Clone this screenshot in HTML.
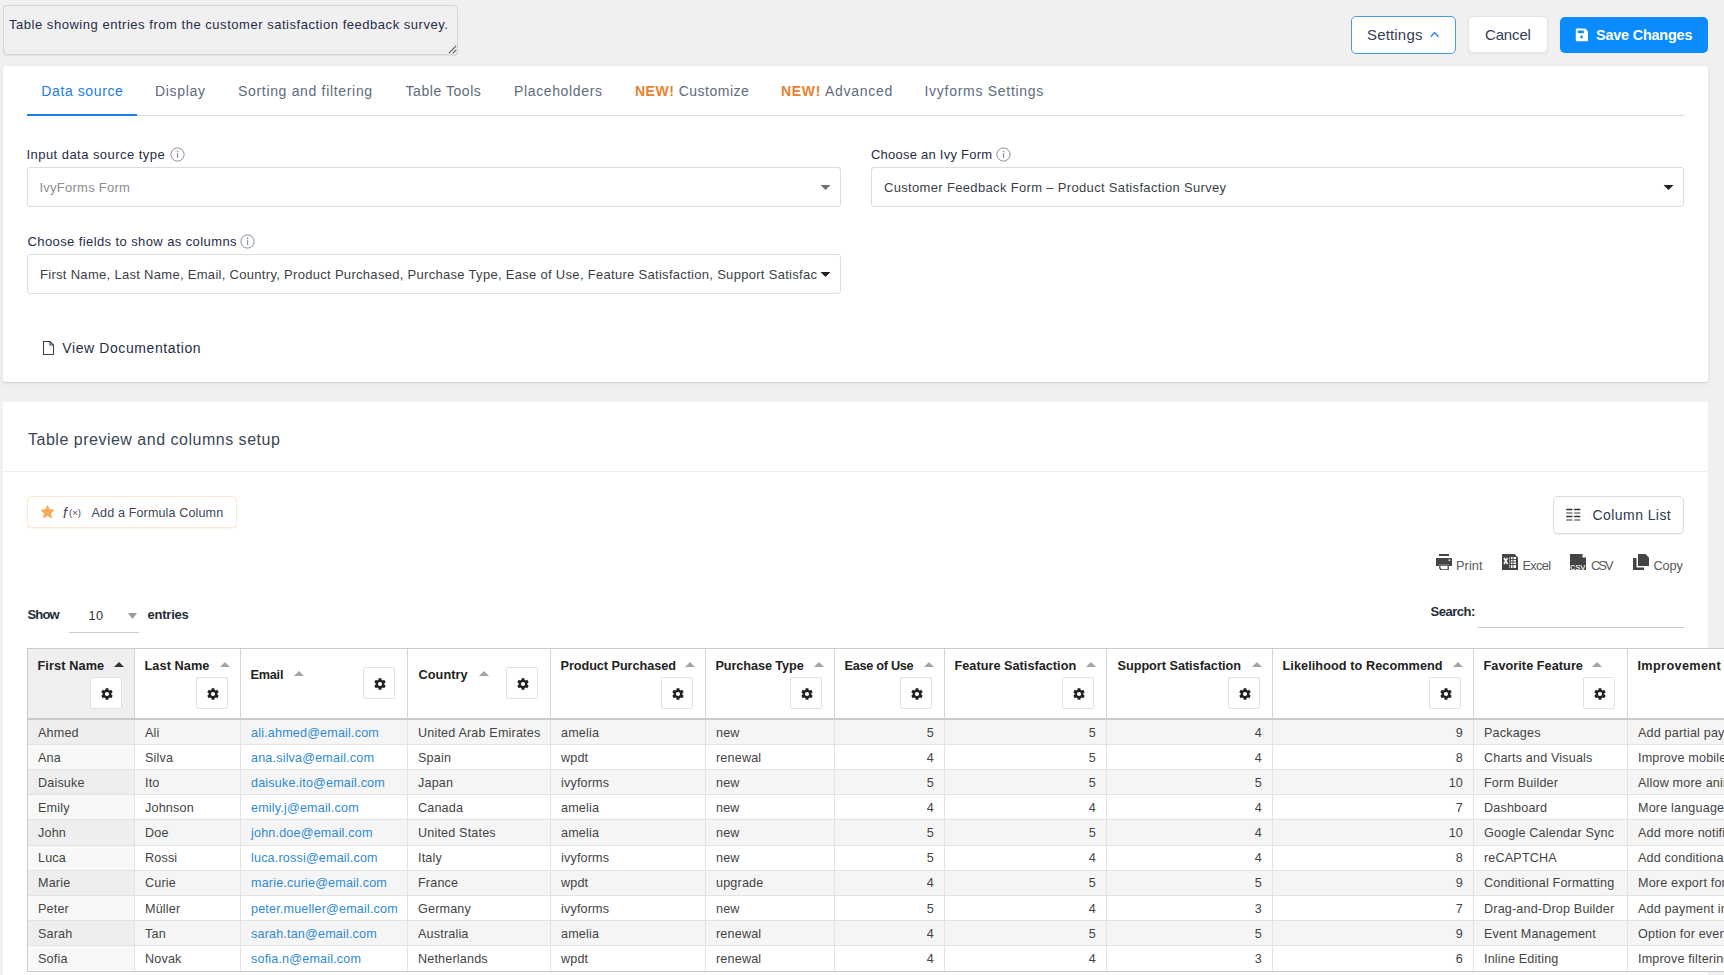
<!DOCTYPE html>
<html><head><meta charset="utf-8"><title>Table preview</title>
<style>
*{box-sizing:border-box;margin:0;padding:0}
html,body{width:1724px;height:975px;overflow:hidden;background:#f0f0f1;font-family:"Liberation Sans",sans-serif}
body{position:relative}
.t{position:absolute;white-space:nowrap;line-height:1}
</style></head><body>
<div style="position:absolute;left:3px;top:5px;width:455px;height:50px;border:1px solid #d6d6d8;border-radius:4px;background:#f0f0f1;box-shadow:0 1px 1px rgba(0,0,0,.07)"></div>
<svg style="position:absolute;left:447px;top:44px" width="10" height="10"><path d="M8.9 2.1 L2.2 8.8 M8.9 6.1 L6.2 8.8" stroke="#555" stroke-width="1.1" stroke-linecap="round"/></svg>
<div style="position:absolute;left:1351px;top:16px;width:105px;height:38px;border:1px solid #4a97e2;border-radius:5px;background:#fff"></div>
<svg style="position:absolute;left:1429px;top:30px" width="11" height="9"><path d="M1.7 6.7 L5.6 2.6 L9.5 6.7" fill="none" stroke="#2f86de" stroke-width="1.45"/></svg>
<div style="position:absolute;left:1468px;top:16px;width:80px;height:37px;border:1px solid #e2e4e8;border-radius:5px;background:#fff;box-shadow:0 1px 2px rgba(16,24,40,.08)"></div>
<div style="position:absolute;left:1560px;top:17px;width:148px;height:36px;border-radius:5px;background:#0a8bfe"></div>
<svg style="position:absolute;left:1575px;top:28px" width="14" height="14" viewBox="0 0 14 14"><path d="M1.3 0.5 H10.3 L13 3.2 V12.8 Q13 13.3 12.5 13.3 H1.3 Q0.8 13.3 0.8 12.8 V1 Q0.8 0.5 1.3 0.5 Z" fill="#fff"/><rect x="2.8" y="2.5" width="6" height="2.7" fill="#0a8bfe"/><circle cx="6.5" cy="9" r="1.4" fill="#0a8bfe"/></svg>
<div style="position:absolute;left:3px;top:66px;width:1705px;height:316px;background:#fff;border-radius:3px;box-shadow:0 1px 1px rgba(0,0,0,.10),0 2px 6px rgba(0,0,0,.06)"></div>
<div style="position:absolute;left:27px;top:115px;width:1657px;height:1px;background:#d9dde3"></div>
<div style="position:absolute;left:27px;top:114px;width:110px;height:2px;background:#1b7ee0"></div>
<svg style="position:absolute;left:169.5px;top:146.5px" width="15" height="15" viewBox="0 0 15 15"><circle cx="7.5" cy="7.5" r="6.6" fill="none" stroke="#8792a2" stroke-width="1"/><rect x="6.9" y="6.3" width="1.3" height="4.6" fill="#8792a2"/><circle cx="7.55" cy="4.4" r=".8" fill="#8792a2"/></svg>
<svg style="position:absolute;left:996px;top:146.5px" width="15" height="15" viewBox="0 0 15 15"><circle cx="7.5" cy="7.5" r="6.6" fill="none" stroke="#8792a2" stroke-width="1"/><rect x="6.9" y="6.3" width="1.3" height="4.6" fill="#8792a2"/><circle cx="7.55" cy="4.4" r=".8" fill="#8792a2"/></svg>
<svg style="position:absolute;left:240px;top:233.5px" width="15" height="15" viewBox="0 0 15 15"><circle cx="7.5" cy="7.5" r="6.6" fill="none" stroke="#8792a2" stroke-width="1"/><rect x="6.9" y="6.3" width="1.3" height="4.6" fill="#8792a2"/><circle cx="7.55" cy="4.4" r=".8" fill="#8792a2"/></svg>
<div style="position:absolute;left:27px;top:167px;width:814px;height:40px;border:1px solid #dadde3;border-radius:3px;background:#fff"></div>
<svg style="position:absolute;left:819.5px;top:183.5px" width="11" height="7"><path d="M0.5 1 H10.5 L5.5 6 Z" fill="#707070"/></svg>
<div style="position:absolute;left:871px;top:167px;width:813px;height:40px;border:1px solid #dadde3;border-radius:3px;background:#fff"></div>
<svg style="position:absolute;left:1662.5px;top:183.5px" width="11" height="7"><path d="M0.5 1 H10.5 L5.5 6 Z" fill="#222"/></svg>
<div style="position:absolute;left:27px;top:254px;width:814px;height:40px;border:1px solid #dadde3;border-radius:3px;background:#fff"></div>
<svg style="position:absolute;left:819.5px;top:270.5px" width="11" height="7"><path d="M0.5 1 H10.5 L5.5 6 Z" fill="#222"/></svg>
<div style="position:absolute;left:40px;top:262px;width:777px;height:24px;overflow:hidden"><div class="t" style="left:0;top:6.00px;font-size:13px;color:#3a3f47;letter-spacing:0.300px">First Name, Last Name, Email, Country, Product Purchased, Purchase Type, Ease of Use, Feature Satisfaction, Support Satisfaction, Likelihood to Recommend</div></div>
<svg style="position:absolute;left:42px;top:340px" width="13" height="16" viewBox="0 0 13 16"><path d="M1.5 1.5 H8 L11.5 5 V14.5 H1.5 Z M8 1.5 V5 H11.5" fill="none" stroke="#3b4452" stroke-width="1.1"/></svg>
<div style="position:absolute;left:3px;top:402px;width:1705px;height:600px;background:#fff"></div>
<div style="position:absolute;left:3px;top:471px;width:1705px;height:1px;background:#eceef1"></div>
<div style="position:absolute;left:27px;top:496px;width:210px;height:32px;border:1px solid #fce8d0;border-radius:4px;background:#fff;box-shadow:0 1px 1px rgba(240,160,60,.10)"></div>
<svg style="position:absolute;left:39.5px;top:505px" width="15" height="14" viewBox="0 0 24 23"><path d="M12 1 L15.1 7.6 L22.5 8.5 L17 13.5 L18.5 20.8 L12 17.2 L5.5 20.8 L7 13.5 L1.5 8.5 L8.9 7.6 Z" fill="#f8a957" stroke="#f8a957" stroke-width="1.5" stroke-linejoin="round"/></svg>
<div style="position:absolute;left:1553px;top:496px;width:131px;height:38px;border:1px solid #dadde3;border-radius:5px;background:#fff;box-shadow:0 1px 1px rgba(0,0,0,.06)"></div>
<svg style="position:absolute;left:1566px;top:508px" width="15" height="14"><rect x="0.2" y="0.8" width="6.3" height="1.5" rx="0.5" fill="#2a3340"/><rect x="8.1" y="0.8" width="6.3" height="1.5" rx="0.5" fill="#2a3340"/><rect x="0.2" y="4.2" width="6.3" height="1.5" rx="0.5" fill="#7a7a7a"/><rect x="8.1" y="4.2" width="6.3" height="1.5" rx="0.5" fill="#7a7a7a"/><rect x="0.2" y="7.8" width="6.3" height="1.5" rx="0.5" fill="#2a3340"/><rect x="8.1" y="7.8" width="6.3" height="1.5" rx="0.5" fill="#2a3340"/><rect x="0.2" y="11.2" width="6.3" height="1.5" rx="0.5" fill="#7a7a7a"/><rect x="8.1" y="11.2" width="6.3" height="1.5" rx="0.5" fill="#7a7a7a"/></svg>
<svg style="position:absolute;left:1435.5px;top:554px" width="16" height="16" viewBox="0 0 16 16"><rect x="3" y="0" width="10" height="2" fill="#444"/><path d="M0 4 H16 V12 H13 V10 H3 V12 H0 Z" fill="#444"/><path d="M3.8 11 H12.2 V16 H5.5 L3.8 14.3 Z" fill="none" stroke="#444" stroke-width="1.3"/><rect x="12.5" y="5.5" width="1.8" height="1.3" fill="#fff"/></svg>
<svg style="position:absolute;left:1502px;top:554px" width="16" height="16" viewBox="0 0 16 16"><path d="M0 0 H12.5 L16 3.5 V16 H0 Z" fill="#444"/><path d="M2 4 L5.5 10 M5.5 4 L2 10" stroke="#fff" stroke-width="1.5"/><rect x="7.5" y="3" width="6.5" height="11" fill="#fff"/><path d="M8.5 3 V14 M11 3 V14 M7.5 5.5 H14 M7.5 8 H14 M7.5 10.5 H14" stroke="#444" stroke-width="0.9"/></svg>
<svg style="position:absolute;left:1570px;top:554px" width="16" height="16" viewBox="0 0 16 16"><path d="M0 0 H12.5 L16 3.5 V16 H0 Z" fill="#444"/><path d="M12.5 0 V3.5 H16" fill="#fff"/><text x="0" y="15.8" font-family="Liberation Sans" font-size="9" fill="#fff" textLength="15.5" lengthAdjust="spacingAndGlyphs">csv</text></svg>
<svg style="position:absolute;left:1632.5px;top:554px" width="16" height="16" viewBox="0 0 16 16"><path d="M5 0 H12.5 L16 3.5 V12 H5 Z" fill="#444"/><path d="M0 4 H3.5 V13.5 H11 V16 H0 Z" fill="#444"/></svg>
<svg style="position:absolute;left:127.5px;top:613px" width="9" height="6"><path d="M0 0 H9 L4.5 6 Z" fill="#9a9a9a"/></svg>
<div style="position:absolute;left:69px;top:632px;width:70px;height:1px;background:#cfcfcf"></div>
<div style="position:absolute;left:1478px;top:627px;width:206px;height:1px;background:#c5c5c5"></div>
<div style="position:absolute;left:27px;top:648px;width:1700px;height:1px;background:#cbcbcb"></div>
<div style="position:absolute;left:28px;top:649px;width:1700px;height:69px;background:#fff"></div>
<div style="position:absolute;left:28px;top:649px;width:106px;height:69px;background:#efefef"></div>
<div style="position:absolute;left:27px;top:718px;width:1700px;height:2px;background:#c9c9c9"></div>
<div style="position:absolute;left:28px;top:720px;width:1700px;height:24px;background:#f5f5f5"></div>
<div style="position:absolute;left:28px;top:720px;width:106px;height:24px;background:#eeeeee"></div>
<div style="position:absolute;left:27px;top:744px;width:1700px;height:1px;background:#e3e3e3"></div>
<div style="position:absolute;left:28px;top:745px;width:1700px;height:24px;background:#ffffff"></div>
<div style="position:absolute;left:28px;top:745px;width:106px;height:24px;background:#f8f8f8"></div>
<div style="position:absolute;left:27px;top:769px;width:1700px;height:1px;background:#e3e3e3"></div>
<div style="position:absolute;left:28px;top:770px;width:1700px;height:24px;background:#f5f5f5"></div>
<div style="position:absolute;left:28px;top:770px;width:106px;height:24px;background:#eeeeee"></div>
<div style="position:absolute;left:27px;top:794px;width:1700px;height:1px;background:#e3e3e3"></div>
<div style="position:absolute;left:28px;top:795px;width:1700px;height:24px;background:#ffffff"></div>
<div style="position:absolute;left:28px;top:795px;width:106px;height:24px;background:#f8f8f8"></div>
<div style="position:absolute;left:27px;top:819px;width:1700px;height:1px;background:#e3e3e3"></div>
<div style="position:absolute;left:28px;top:820px;width:1700px;height:25px;background:#f5f5f5"></div>
<div style="position:absolute;left:28px;top:820px;width:106px;height:25px;background:#eeeeee"></div>
<div style="position:absolute;left:27px;top:845px;width:1700px;height:1px;background:#e3e3e3"></div>
<div style="position:absolute;left:28px;top:846px;width:1700px;height:24px;background:#ffffff"></div>
<div style="position:absolute;left:28px;top:846px;width:106px;height:24px;background:#f8f8f8"></div>
<div style="position:absolute;left:27px;top:870px;width:1700px;height:1px;background:#e3e3e3"></div>
<div style="position:absolute;left:28px;top:871px;width:1700px;height:24px;background:#f5f5f5"></div>
<div style="position:absolute;left:28px;top:871px;width:106px;height:24px;background:#eeeeee"></div>
<div style="position:absolute;left:27px;top:895px;width:1700px;height:1px;background:#e3e3e3"></div>
<div style="position:absolute;left:28px;top:896px;width:1700px;height:24px;background:#ffffff"></div>
<div style="position:absolute;left:28px;top:896px;width:106px;height:24px;background:#f8f8f8"></div>
<div style="position:absolute;left:27px;top:920px;width:1700px;height:1px;background:#e3e3e3"></div>
<div style="position:absolute;left:28px;top:921px;width:1700px;height:24px;background:#f5f5f5"></div>
<div style="position:absolute;left:28px;top:921px;width:106px;height:24px;background:#eeeeee"></div>
<div style="position:absolute;left:27px;top:945px;width:1700px;height:1px;background:#e3e3e3"></div>
<div style="position:absolute;left:28px;top:946px;width:1700px;height:25px;background:#ffffff"></div>
<div style="position:absolute;left:28px;top:946px;width:106px;height:25px;background:#f8f8f8"></div>
<div style="position:absolute;left:27px;top:971px;width:1700px;height:1px;background:#c9c9c9"></div>
<div style="position:absolute;left:27px;top:649px;width:1px;height:69px;background:#cbcbcb"></div>
<div style="position:absolute;left:27px;top:720px;width:1px;height:251px;background:#cbcbcb"></div>
<div style="position:absolute;left:134px;top:649px;width:1px;height:69px;background:#d6d6d6"></div>
<div style="position:absolute;left:134px;top:720px;width:1px;height:251px;background:#e3e3e3"></div>
<div style="position:absolute;left:240px;top:649px;width:1px;height:69px;background:#d6d6d6"></div>
<div style="position:absolute;left:240px;top:720px;width:1px;height:251px;background:#e3e3e3"></div>
<div style="position:absolute;left:407px;top:649px;width:1px;height:69px;background:#d6d6d6"></div>
<div style="position:absolute;left:407px;top:720px;width:1px;height:251px;background:#e3e3e3"></div>
<div style="position:absolute;left:550px;top:649px;width:1px;height:69px;background:#d6d6d6"></div>
<div style="position:absolute;left:550px;top:720px;width:1px;height:251px;background:#e3e3e3"></div>
<div style="position:absolute;left:705px;top:649px;width:1px;height:69px;background:#d6d6d6"></div>
<div style="position:absolute;left:705px;top:720px;width:1px;height:251px;background:#e3e3e3"></div>
<div style="position:absolute;left:834px;top:649px;width:1px;height:69px;background:#d6d6d6"></div>
<div style="position:absolute;left:834px;top:720px;width:1px;height:251px;background:#e3e3e3"></div>
<div style="position:absolute;left:944px;top:649px;width:1px;height:69px;background:#d6d6d6"></div>
<div style="position:absolute;left:944px;top:720px;width:1px;height:251px;background:#e3e3e3"></div>
<div style="position:absolute;left:1106px;top:649px;width:1px;height:69px;background:#d6d6d6"></div>
<div style="position:absolute;left:1106px;top:720px;width:1px;height:251px;background:#e3e3e3"></div>
<div style="position:absolute;left:1272px;top:649px;width:1px;height:69px;background:#d6d6d6"></div>
<div style="position:absolute;left:1272px;top:720px;width:1px;height:251px;background:#e3e3e3"></div>
<div style="position:absolute;left:1473px;top:649px;width:1px;height:69px;background:#d6d6d6"></div>
<div style="position:absolute;left:1473px;top:720px;width:1px;height:251px;background:#e3e3e3"></div>
<div style="position:absolute;left:1627px;top:649px;width:1px;height:69px;background:#d6d6d6"></div>
<div style="position:absolute;left:1627px;top:720px;width:1px;height:251px;background:#e3e3e3"></div>
<svg style="position:absolute;left:114px;top:662px" width="10" height="5"><path d="M0 5 H10 L5 0 Z" fill="#333"/></svg>
<div style="position:absolute;left:90px;top:677px;width:32px;height:32px;border:1px solid #e2e2e2;border-radius:2px;background:#fff"></div>
<svg width="14" height="14" viewBox="0 0 24 24" style="position:absolute;left:99.6px;top:686.9px"><path fill="#222" fill-rule="evenodd" d="M9.40 4.86 L9.53 2.10 L14.47 2.10 L14.60 4.86 L16.89 6.18 L19.34 4.91 L21.80 9.19 L19.48 10.68 L19.48 13.32 L21.80 14.81 L19.34 19.09 L16.89 17.82 L14.60 19.14 L14.47 21.90 L9.53 21.90 L9.40 19.14 L7.11 17.82 L4.66 19.09 L2.20 14.81 L4.52 13.32 L4.52 10.68 L2.20 9.19 L4.66 4.91 L7.11 6.18 Z M15.6 12 A3.6 3.6 0 1 0 8.4 12 A3.6 3.6 0 1 0 15.6 12 Z"/></svg>
<svg style="position:absolute;left:220px;top:662px" width="10" height="5"><path d="M0 5 H10 L5 0 Z" fill="#a3a3a3"/></svg>
<div style="position:absolute;left:196px;top:677px;width:32px;height:32px;border:1px solid #e2e2e2;border-radius:2px;background:#fff"></div>
<svg width="14" height="14" viewBox="0 0 24 24" style="position:absolute;left:205.6px;top:686.9px"><path fill="#222" fill-rule="evenodd" d="M9.40 4.86 L9.53 2.10 L14.47 2.10 L14.60 4.86 L16.89 6.18 L19.34 4.91 L21.80 9.19 L19.48 10.68 L19.48 13.32 L21.80 14.81 L19.34 19.09 L16.89 17.82 L14.60 19.14 L14.47 21.90 L9.53 21.90 L9.40 19.14 L7.11 17.82 L4.66 19.09 L2.20 14.81 L4.52 13.32 L4.52 10.68 L2.20 9.19 L4.66 4.91 L7.11 6.18 Z M15.6 12 A3.6 3.6 0 1 0 8.4 12 A3.6 3.6 0 1 0 15.6 12 Z"/></svg>
<svg style="position:absolute;left:294px;top:671px" width="10" height="5"><path d="M0 5 H10 L5 0 Z" fill="#a3a3a3"/></svg>
<div style="position:absolute;left:363px;top:667px;width:32px;height:32px;border:1px solid #e2e2e2;border-radius:2px;background:#fff"></div>
<svg width="14" height="14" viewBox="0 0 24 24" style="position:absolute;left:372.6px;top:676.9px"><path fill="#222" fill-rule="evenodd" d="M9.40 4.86 L9.53 2.10 L14.47 2.10 L14.60 4.86 L16.89 6.18 L19.34 4.91 L21.80 9.19 L19.48 10.68 L19.48 13.32 L21.80 14.81 L19.34 19.09 L16.89 17.82 L14.60 19.14 L14.47 21.90 L9.53 21.90 L9.40 19.14 L7.11 17.82 L4.66 19.09 L2.20 14.81 L4.52 13.32 L4.52 10.68 L2.20 9.19 L4.66 4.91 L7.11 6.18 Z M15.6 12 A3.6 3.6 0 1 0 8.4 12 A3.6 3.6 0 1 0 15.6 12 Z"/></svg>
<svg style="position:absolute;left:479px;top:671px" width="10" height="5"><path d="M0 5 H10 L5 0 Z" fill="#a3a3a3"/></svg>
<div style="position:absolute;left:506px;top:667px;width:32px;height:32px;border:1px solid #e2e2e2;border-radius:2px;background:#fff"></div>
<svg width="14" height="14" viewBox="0 0 24 24" style="position:absolute;left:515.6px;top:676.9px"><path fill="#222" fill-rule="evenodd" d="M9.40 4.86 L9.53 2.10 L14.47 2.10 L14.60 4.86 L16.89 6.18 L19.34 4.91 L21.80 9.19 L19.48 10.68 L19.48 13.32 L21.80 14.81 L19.34 19.09 L16.89 17.82 L14.60 19.14 L14.47 21.90 L9.53 21.90 L9.40 19.14 L7.11 17.82 L4.66 19.09 L2.20 14.81 L4.52 13.32 L4.52 10.68 L2.20 9.19 L4.66 4.91 L7.11 6.18 Z M15.6 12 A3.6 3.6 0 1 0 8.4 12 A3.6 3.6 0 1 0 15.6 12 Z"/></svg>
<svg style="position:absolute;left:685px;top:662px" width="10" height="5"><path d="M0 5 H10 L5 0 Z" fill="#a3a3a3"/></svg>
<div style="position:absolute;left:661px;top:677px;width:32px;height:32px;border:1px solid #e2e2e2;border-radius:2px;background:#fff"></div>
<svg width="14" height="14" viewBox="0 0 24 24" style="position:absolute;left:670.6px;top:686.9px"><path fill="#222" fill-rule="evenodd" d="M9.40 4.86 L9.53 2.10 L14.47 2.10 L14.60 4.86 L16.89 6.18 L19.34 4.91 L21.80 9.19 L19.48 10.68 L19.48 13.32 L21.80 14.81 L19.34 19.09 L16.89 17.82 L14.60 19.14 L14.47 21.90 L9.53 21.90 L9.40 19.14 L7.11 17.82 L4.66 19.09 L2.20 14.81 L4.52 13.32 L4.52 10.68 L2.20 9.19 L4.66 4.91 L7.11 6.18 Z M15.6 12 A3.6 3.6 0 1 0 8.4 12 A3.6 3.6 0 1 0 15.6 12 Z"/></svg>
<svg style="position:absolute;left:814px;top:662px" width="10" height="5"><path d="M0 5 H10 L5 0 Z" fill="#a3a3a3"/></svg>
<div style="position:absolute;left:790px;top:677px;width:32px;height:32px;border:1px solid #e2e2e2;border-radius:2px;background:#fff"></div>
<svg width="14" height="14" viewBox="0 0 24 24" style="position:absolute;left:799.6px;top:686.9px"><path fill="#222" fill-rule="evenodd" d="M9.40 4.86 L9.53 2.10 L14.47 2.10 L14.60 4.86 L16.89 6.18 L19.34 4.91 L21.80 9.19 L19.48 10.68 L19.48 13.32 L21.80 14.81 L19.34 19.09 L16.89 17.82 L14.60 19.14 L14.47 21.90 L9.53 21.90 L9.40 19.14 L7.11 17.82 L4.66 19.09 L2.20 14.81 L4.52 13.32 L4.52 10.68 L2.20 9.19 L4.66 4.91 L7.11 6.18 Z M15.6 12 A3.6 3.6 0 1 0 8.4 12 A3.6 3.6 0 1 0 15.6 12 Z"/></svg>
<svg style="position:absolute;left:924px;top:662px" width="10" height="5"><path d="M0 5 H10 L5 0 Z" fill="#a3a3a3"/></svg>
<div style="position:absolute;left:900px;top:677px;width:32px;height:32px;border:1px solid #e2e2e2;border-radius:2px;background:#fff"></div>
<svg width="14" height="14" viewBox="0 0 24 24" style="position:absolute;left:909.6px;top:686.9px"><path fill="#222" fill-rule="evenodd" d="M9.40 4.86 L9.53 2.10 L14.47 2.10 L14.60 4.86 L16.89 6.18 L19.34 4.91 L21.80 9.19 L19.48 10.68 L19.48 13.32 L21.80 14.81 L19.34 19.09 L16.89 17.82 L14.60 19.14 L14.47 21.90 L9.53 21.90 L9.40 19.14 L7.11 17.82 L4.66 19.09 L2.20 14.81 L4.52 13.32 L4.52 10.68 L2.20 9.19 L4.66 4.91 L7.11 6.18 Z M15.6 12 A3.6 3.6 0 1 0 8.4 12 A3.6 3.6 0 1 0 15.6 12 Z"/></svg>
<svg style="position:absolute;left:1086px;top:662px" width="10" height="5"><path d="M0 5 H10 L5 0 Z" fill="#a3a3a3"/></svg>
<div style="position:absolute;left:1062px;top:677px;width:32px;height:32px;border:1px solid #e2e2e2;border-radius:2px;background:#fff"></div>
<svg width="14" height="14" viewBox="0 0 24 24" style="position:absolute;left:1071.6px;top:686.9px"><path fill="#222" fill-rule="evenodd" d="M9.40 4.86 L9.53 2.10 L14.47 2.10 L14.60 4.86 L16.89 6.18 L19.34 4.91 L21.80 9.19 L19.48 10.68 L19.48 13.32 L21.80 14.81 L19.34 19.09 L16.89 17.82 L14.60 19.14 L14.47 21.90 L9.53 21.90 L9.40 19.14 L7.11 17.82 L4.66 19.09 L2.20 14.81 L4.52 13.32 L4.52 10.68 L2.20 9.19 L4.66 4.91 L7.11 6.18 Z M15.6 12 A3.6 3.6 0 1 0 8.4 12 A3.6 3.6 0 1 0 15.6 12 Z"/></svg>
<svg style="position:absolute;left:1252px;top:662px" width="10" height="5"><path d="M0 5 H10 L5 0 Z" fill="#a3a3a3"/></svg>
<div style="position:absolute;left:1228px;top:677px;width:32px;height:32px;border:1px solid #e2e2e2;border-radius:2px;background:#fff"></div>
<svg width="14" height="14" viewBox="0 0 24 24" style="position:absolute;left:1237.6px;top:686.9px"><path fill="#222" fill-rule="evenodd" d="M9.40 4.86 L9.53 2.10 L14.47 2.10 L14.60 4.86 L16.89 6.18 L19.34 4.91 L21.80 9.19 L19.48 10.68 L19.48 13.32 L21.80 14.81 L19.34 19.09 L16.89 17.82 L14.60 19.14 L14.47 21.90 L9.53 21.90 L9.40 19.14 L7.11 17.82 L4.66 19.09 L2.20 14.81 L4.52 13.32 L4.52 10.68 L2.20 9.19 L4.66 4.91 L7.11 6.18 Z M15.6 12 A3.6 3.6 0 1 0 8.4 12 A3.6 3.6 0 1 0 15.6 12 Z"/></svg>
<svg style="position:absolute;left:1453px;top:662px" width="10" height="5"><path d="M0 5 H10 L5 0 Z" fill="#a3a3a3"/></svg>
<div style="position:absolute;left:1429px;top:677px;width:32px;height:32px;border:1px solid #e2e2e2;border-radius:2px;background:#fff"></div>
<svg width="14" height="14" viewBox="0 0 24 24" style="position:absolute;left:1438.6px;top:686.9px"><path fill="#222" fill-rule="evenodd" d="M9.40 4.86 L9.53 2.10 L14.47 2.10 L14.60 4.86 L16.89 6.18 L19.34 4.91 L21.80 9.19 L19.48 10.68 L19.48 13.32 L21.80 14.81 L19.34 19.09 L16.89 17.82 L14.60 19.14 L14.47 21.90 L9.53 21.90 L9.40 19.14 L7.11 17.82 L4.66 19.09 L2.20 14.81 L4.52 13.32 L4.52 10.68 L2.20 9.19 L4.66 4.91 L7.11 6.18 Z M15.6 12 A3.6 3.6 0 1 0 8.4 12 A3.6 3.6 0 1 0 15.6 12 Z"/></svg>
<svg style="position:absolute;left:1592px;top:662px" width="10" height="5"><path d="M0 5 H10 L5 0 Z" fill="#a3a3a3"/></svg>
<div style="position:absolute;left:1583px;top:677px;width:32px;height:32px;border:1px solid #e2e2e2;border-radius:2px;background:#fff"></div>
<svg width="14" height="14" viewBox="0 0 24 24" style="position:absolute;left:1592.6px;top:686.9px"><path fill="#222" fill-rule="evenodd" d="M9.40 4.86 L9.53 2.10 L14.47 2.10 L14.60 4.86 L16.89 6.18 L19.34 4.91 L21.80 9.19 L19.48 10.68 L19.48 13.32 L21.80 14.81 L19.34 19.09 L16.89 17.82 L14.60 19.14 L14.47 21.90 L9.53 21.90 L9.40 19.14 L7.11 17.82 L4.66 19.09 L2.20 14.81 L4.52 13.32 L4.52 10.68 L2.20 9.19 L4.66 4.91 L7.11 6.18 Z M15.6 12 A3.6 3.6 0 1 0 8.4 12 A3.6 3.6 0 1 0 15.6 12 Z"/></svg>
<div class="t" style="left:9.00px;top:17.80px;font-size:13px;font-weight:400;color:#1f2d47;letter-spacing:0.529px;">Table showing entries from the customer satisfaction feedback survey.</div>
<div class="t" style="left:1367.00px;top:26.70px;font-size:15px;font-weight:400;color:#344054;letter-spacing:0.171px;">Settings</div>
<div class="t" style="left:1485.00px;top:26.70px;font-size:15px;font-weight:400;color:#344054;letter-spacing:-0.160px;">Cancel</div>
<div class="t" style="left:1596.00px;top:27.61px;font-size:14.4px;font-weight:700;color:#ffffff;letter-spacing:-0.182px;">Save Changes</div>
<div class="t" style="left:41.30px;top:83.95px;font-size:14px;font-weight:400;color:#1b7ee0;letter-spacing:0.600px;">Data source</div>
<div class="t" style="left:155.00px;top:83.95px;font-size:14px;font-weight:400;color:#5d6b7e;letter-spacing:0.667px;">Display</div>
<div class="t" style="left:238.00px;top:83.95px;font-size:14px;font-weight:400;color:#5d6b7e;letter-spacing:0.675px;">Sorting and filtering</div>
<div class="t" style="left:405.50px;top:83.95px;font-size:14px;font-weight:400;color:#5d6b7e;letter-spacing:0.550px;">Table Tools</div>
<div class="t" style="left:514.00px;top:83.95px;font-size:14px;font-weight:400;color:#5d6b7e;letter-spacing:0.636px;">Placeholders</div>
<div class="t" style="left:635.00px;top:83.95px;font-size:14px;font-weight:400;color:#5d6b7e;letter-spacing:0.500px;"><span style="color:#e8822f;font-weight:700">NEW!</span> Customize</div>
<div class="t" style="left:781.00px;top:83.95px;font-size:14px;font-weight:400;color:#5d6b7e;letter-spacing:0.708px;"><span style="color:#e8822f;font-weight:700">NEW!</span> Advanced</div>
<div class="t" style="left:924.50px;top:83.95px;font-size:14px;font-weight:400;color:#5d6b7e;letter-spacing:0.719px;">Ivyforms Settings</div>
<div class="t" style="left:26.50px;top:148.30px;font-size:13px;font-weight:400;color:#1f2d47;letter-spacing:0.452px;">Input data source type</div>
<div class="t" style="left:871.00px;top:148.30px;font-size:13px;font-weight:400;color:#1f2d47;letter-spacing:0.235px;">Choose an Ivy Form</div>
<div class="t" style="left:27.50px;top:235.30px;font-size:13px;font-weight:400;color:#1f2d47;letter-spacing:0.403px;">Choose fields to show as columns</div>
<div class="t" style="left:39.50px;top:181.00px;font-size:13px;font-weight:400;color:#8c8c8c;letter-spacing:0.242px;">IvyForms Form</div>
<div class="t" style="left:884.00px;top:181.00px;font-size:13px;font-weight:400;color:#3a3f47;letter-spacing:0.333px;">Customer Feedback Form – Product Satisfaction Survey</div>
<div class="t" style="left:62.30px;top:341.45px;font-size:14px;font-weight:400;color:#1f2d47;letter-spacing:0.594px;">View Documentation</div>
<div class="t" style="left:28.00px;top:432.46px;font-size:16px;font-weight:400;color:#3a4656;letter-spacing:0.507px;">Table preview and columns setup</div>
<div class="t" style="left:63.00px;top:505.65px;font-size:14px;font-weight:400;color:#3c4858;letter-spacing:0.000px;font-family:"Liberation Serif",serif;"><i>f</i></div>
<div class="t" style="left:69.00px;top:508.46px;font-size:9.5px;font-weight:400;color:#3c4858;letter-spacing:0.000px;">(×)</div>
<div class="t" style="left:91.60px;top:507.33px;font-size:12.6px;font-weight:400;color:#3c4858;letter-spacing:0.111px;">Add a Formula Column</div>
<div class="t" style="left:1592.60px;top:508.15px;font-size:14px;font-weight:400;color:#2c3a4d;letter-spacing:0.420px;">Column List</div>
<div class="t" style="left:1456.00px;top:559.86px;font-size:12.8px;font-weight:400;color:#5a5a5a;letter-spacing:0.050px;">Print</div>
<div class="t" style="left:1522.40px;top:559.86px;font-size:12.8px;font-weight:400;color:#5a5a5a;letter-spacing:-0.675px;">Excel</div>
<div class="t" style="left:1590.90px;top:559.86px;font-size:12.8px;font-weight:400;color:#5a5a5a;letter-spacing:-1.800px;">CSV</div>
<div class="t" style="left:1653.50px;top:559.86px;font-size:12.8px;font-weight:400;color:#5a5a5a;letter-spacing:-0.167px;">Copy</div>
<div class="t" style="left:27.50px;top:607.80px;font-size:13px;font-weight:700;color:#222d3a;letter-spacing:-0.833px;">Show</div>
<div class="t" style="left:88.60px;top:610.16px;font-size:12.8px;font-weight:400;color:#333;letter-spacing:0.200px;">10</div>
<div class="t" style="left:147.60px;top:607.80px;font-size:13px;font-weight:700;color:#222d3a;letter-spacing:-0.250px;">entries</div>
<div class="t" style="left:1430.60px;top:604.80px;font-size:13px;font-weight:700;color:#222d3a;letter-spacing:-0.483px;">Search:</div>
<div class="t" style="left:37.50px;top:659.55px;font-size:12.7px;font-weight:700;color:#222;letter-spacing:0.122px;">First Name</div>
<div class="t" style="left:144.50px;top:659.55px;font-size:12.7px;font-weight:700;color:#222;letter-spacing:0.088px;">Last Name</div>
<div class="t" style="left:250.50px;top:668.85px;font-size:12.7px;font-weight:700;color:#222;letter-spacing:-0.225px;">Email</div>
<div class="t" style="left:418.50px;top:668.85px;font-size:12.7px;font-weight:700;color:#222;letter-spacing:0.083px;">Country</div>
<div class="t" style="left:560.50px;top:659.55px;font-size:12.7px;font-weight:700;color:#222;letter-spacing:-0.056px;">Product Purchased</div>
<div class="t" style="left:715.50px;top:659.55px;font-size:12.7px;font-weight:700;color:#222;letter-spacing:-0.092px;">Purchase Type</div>
<div class="t" style="left:844.50px;top:659.55px;font-size:12.7px;font-weight:700;color:#222;letter-spacing:-0.280px;">Ease of Use</div>
<div class="t" style="left:954.50px;top:659.55px;font-size:12.7px;font-weight:700;color:#222;letter-spacing:0.021px;">Feature Satisfaction</div>
<div class="t" style="left:1117.50px;top:659.55px;font-size:12.7px;font-weight:700;color:#222;letter-spacing:-0.026px;">Support Satisfaction</div>
<div class="t" style="left:1282.50px;top:659.55px;font-size:12.7px;font-weight:700;color:#222;letter-spacing:0.068px;">Likelihood to Recommend</div>
<div class="t" style="left:1483.50px;top:659.55px;font-size:12.7px;font-weight:700;color:#222;letter-spacing:0.047px;">Favorite Feature</div>
<div class="t" style="left:1637.50px;top:659.55px;font-size:12.7px;font-weight:700;color:#222;letter-spacing:0.350px;">Improvement</div>
<div class="t" style="left:38.00px;top:726.83px;font-size:12.6px;font-weight:400;color:#444444;letter-spacing:0.170px;">Ahmed</div>
<div class="t" style="left:145.00px;top:726.83px;font-size:12.6px;font-weight:400;color:#444444;letter-spacing:0.170px;">Ali</div>
<div class="t" style="left:251.00px;top:726.83px;font-size:12.6px;font-weight:400;color:#2f8ad2;letter-spacing:0.170px;">ali.ahmed@email.com</div>
<div class="t" style="left:418.00px;top:726.83px;font-size:12.6px;font-weight:400;color:#444444;letter-spacing:0.170px;">United Arab Emirates</div>
<div class="t" style="left:561.00px;top:726.83px;font-size:12.6px;font-weight:400;color:#444444;letter-spacing:0.170px;">amelia</div>
<div class="t" style="left:716.00px;top:726.83px;font-size:12.6px;font-weight:400;color:#444444;letter-spacing:0.170px;">new</div>
<div class="t" style="left:926.70px;top:726.83px;font-size:12.6px;font-weight:400;color:#444444;letter-spacing:0.170px;">5</div>
<div class="t" style="left:1088.70px;top:726.83px;font-size:12.6px;font-weight:400;color:#444444;letter-spacing:0.170px;">5</div>
<div class="t" style="left:1254.70px;top:726.83px;font-size:12.6px;font-weight:400;color:#444444;letter-spacing:0.170px;">4</div>
<div class="t" style="left:1455.70px;top:726.83px;font-size:12.6px;font-weight:400;color:#444444;letter-spacing:0.170px;">9</div>
<div class="t" style="left:1484.00px;top:726.83px;font-size:12.6px;font-weight:400;color:#444444;letter-spacing:0.170px;">Packages</div>
<div class="t" style="left:1638.00px;top:726.83px;font-size:12.6px;font-weight:400;color:#444444;letter-spacing:0.170px;">Add partial payments</div>
<div class="t" style="left:38.00px;top:751.93px;font-size:12.6px;font-weight:400;color:#444444;letter-spacing:0.170px;">Ana</div>
<div class="t" style="left:145.00px;top:751.93px;font-size:12.6px;font-weight:400;color:#444444;letter-spacing:0.170px;">Silva</div>
<div class="t" style="left:251.00px;top:751.93px;font-size:12.6px;font-weight:400;color:#2f8ad2;letter-spacing:0.170px;">ana.silva@email.com</div>
<div class="t" style="left:418.00px;top:751.93px;font-size:12.6px;font-weight:400;color:#444444;letter-spacing:0.170px;">Spain</div>
<div class="t" style="left:561.00px;top:751.93px;font-size:12.6px;font-weight:400;color:#444444;letter-spacing:0.170px;">wpdt</div>
<div class="t" style="left:716.00px;top:751.93px;font-size:12.6px;font-weight:400;color:#444444;letter-spacing:0.170px;">renewal</div>
<div class="t" style="left:926.70px;top:751.93px;font-size:12.6px;font-weight:400;color:#444444;letter-spacing:0.170px;">4</div>
<div class="t" style="left:1088.70px;top:751.93px;font-size:12.6px;font-weight:400;color:#444444;letter-spacing:0.170px;">5</div>
<div class="t" style="left:1254.70px;top:751.93px;font-size:12.6px;font-weight:400;color:#444444;letter-spacing:0.170px;">4</div>
<div class="t" style="left:1455.70px;top:751.93px;font-size:12.6px;font-weight:400;color:#444444;letter-spacing:0.170px;">8</div>
<div class="t" style="left:1484.00px;top:751.93px;font-size:12.6px;font-weight:400;color:#444444;letter-spacing:0.170px;">Charts and Visuals</div>
<div class="t" style="left:1638.00px;top:751.93px;font-size:12.6px;font-weight:400;color:#444444;letter-spacing:0.170px;">Improve mobile view</div>
<div class="t" style="left:38.00px;top:777.03px;font-size:12.6px;font-weight:400;color:#444444;letter-spacing:0.170px;">Daisuke</div>
<div class="t" style="left:145.00px;top:777.03px;font-size:12.6px;font-weight:400;color:#444444;letter-spacing:0.170px;">Ito</div>
<div class="t" style="left:251.00px;top:777.03px;font-size:12.6px;font-weight:400;color:#2f8ad2;letter-spacing:0.170px;">daisuke.ito@email.com</div>
<div class="t" style="left:418.00px;top:777.03px;font-size:12.6px;font-weight:400;color:#444444;letter-spacing:0.170px;">Japan</div>
<div class="t" style="left:561.00px;top:777.03px;font-size:12.6px;font-weight:400;color:#444444;letter-spacing:0.170px;">ivyforms</div>
<div class="t" style="left:716.00px;top:777.03px;font-size:12.6px;font-weight:400;color:#444444;letter-spacing:0.170px;">new</div>
<div class="t" style="left:926.70px;top:777.03px;font-size:12.6px;font-weight:400;color:#444444;letter-spacing:0.170px;">5</div>
<div class="t" style="left:1088.70px;top:777.03px;font-size:12.6px;font-weight:400;color:#444444;letter-spacing:0.170px;">5</div>
<div class="t" style="left:1254.70px;top:777.03px;font-size:12.6px;font-weight:400;color:#444444;letter-spacing:0.170px;">5</div>
<div class="t" style="left:1448.70px;top:777.03px;font-size:12.6px;font-weight:400;color:#444444;letter-spacing:0.170px;">10</div>
<div class="t" style="left:1484.00px;top:777.03px;font-size:12.6px;font-weight:400;color:#444444;letter-spacing:0.170px;">Form Builder</div>
<div class="t" style="left:1638.00px;top:777.03px;font-size:12.6px;font-weight:400;color:#444444;letter-spacing:0.170px;">Allow more animations</div>
<div class="t" style="left:38.00px;top:802.13px;font-size:12.6px;font-weight:400;color:#444444;letter-spacing:0.170px;">Emily</div>
<div class="t" style="left:145.00px;top:802.13px;font-size:12.6px;font-weight:400;color:#444444;letter-spacing:0.170px;">Johnson</div>
<div class="t" style="left:251.00px;top:802.13px;font-size:12.6px;font-weight:400;color:#2f8ad2;letter-spacing:0.170px;">emily.j@email.com</div>
<div class="t" style="left:418.00px;top:802.13px;font-size:12.6px;font-weight:400;color:#444444;letter-spacing:0.170px;">Canada</div>
<div class="t" style="left:561.00px;top:802.13px;font-size:12.6px;font-weight:400;color:#444444;letter-spacing:0.170px;">amelia</div>
<div class="t" style="left:716.00px;top:802.13px;font-size:12.6px;font-weight:400;color:#444444;letter-spacing:0.170px;">new</div>
<div class="t" style="left:926.70px;top:802.13px;font-size:12.6px;font-weight:400;color:#444444;letter-spacing:0.170px;">4</div>
<div class="t" style="left:1088.70px;top:802.13px;font-size:12.6px;font-weight:400;color:#444444;letter-spacing:0.170px;">4</div>
<div class="t" style="left:1254.70px;top:802.13px;font-size:12.6px;font-weight:400;color:#444444;letter-spacing:0.170px;">4</div>
<div class="t" style="left:1455.70px;top:802.13px;font-size:12.6px;font-weight:400;color:#444444;letter-spacing:0.170px;">7</div>
<div class="t" style="left:1484.00px;top:802.13px;font-size:12.6px;font-weight:400;color:#444444;letter-spacing:0.170px;">Dashboard</div>
<div class="t" style="left:1638.00px;top:802.13px;font-size:12.6px;font-weight:400;color:#444444;letter-spacing:0.170px;">More language options</div>
<div class="t" style="left:38.00px;top:827.23px;font-size:12.6px;font-weight:400;color:#444444;letter-spacing:0.170px;">John</div>
<div class="t" style="left:145.00px;top:827.23px;font-size:12.6px;font-weight:400;color:#444444;letter-spacing:0.170px;">Doe</div>
<div class="t" style="left:251.00px;top:827.23px;font-size:12.6px;font-weight:400;color:#2f8ad2;letter-spacing:0.170px;">john.doe@email.com</div>
<div class="t" style="left:418.00px;top:827.23px;font-size:12.6px;font-weight:400;color:#444444;letter-spacing:0.170px;">United States</div>
<div class="t" style="left:561.00px;top:827.23px;font-size:12.6px;font-weight:400;color:#444444;letter-spacing:0.170px;">amelia</div>
<div class="t" style="left:716.00px;top:827.23px;font-size:12.6px;font-weight:400;color:#444444;letter-spacing:0.170px;">new</div>
<div class="t" style="left:926.70px;top:827.23px;font-size:12.6px;font-weight:400;color:#444444;letter-spacing:0.170px;">5</div>
<div class="t" style="left:1088.70px;top:827.23px;font-size:12.6px;font-weight:400;color:#444444;letter-spacing:0.170px;">5</div>
<div class="t" style="left:1254.70px;top:827.23px;font-size:12.6px;font-weight:400;color:#444444;letter-spacing:0.170px;">4</div>
<div class="t" style="left:1448.70px;top:827.23px;font-size:12.6px;font-weight:400;color:#444444;letter-spacing:0.170px;">10</div>
<div class="t" style="left:1484.00px;top:827.23px;font-size:12.6px;font-weight:400;color:#444444;letter-spacing:0.170px;">Google Calendar Sync</div>
<div class="t" style="left:1638.00px;top:827.23px;font-size:12.6px;font-weight:400;color:#444444;letter-spacing:0.170px;">Add more notifications</div>
<div class="t" style="left:38.00px;top:852.33px;font-size:12.6px;font-weight:400;color:#444444;letter-spacing:0.170px;">Luca</div>
<div class="t" style="left:145.00px;top:852.33px;font-size:12.6px;font-weight:400;color:#444444;letter-spacing:0.170px;">Rossi</div>
<div class="t" style="left:251.00px;top:852.33px;font-size:12.6px;font-weight:400;color:#2f8ad2;letter-spacing:0.170px;">luca.rossi@email.com</div>
<div class="t" style="left:418.00px;top:852.33px;font-size:12.6px;font-weight:400;color:#444444;letter-spacing:0.170px;">Italy</div>
<div class="t" style="left:561.00px;top:852.33px;font-size:12.6px;font-weight:400;color:#444444;letter-spacing:0.170px;">ivyforms</div>
<div class="t" style="left:716.00px;top:852.33px;font-size:12.6px;font-weight:400;color:#444444;letter-spacing:0.170px;">new</div>
<div class="t" style="left:926.70px;top:852.33px;font-size:12.6px;font-weight:400;color:#444444;letter-spacing:0.170px;">5</div>
<div class="t" style="left:1088.70px;top:852.33px;font-size:12.6px;font-weight:400;color:#444444;letter-spacing:0.170px;">4</div>
<div class="t" style="left:1254.70px;top:852.33px;font-size:12.6px;font-weight:400;color:#444444;letter-spacing:0.170px;">4</div>
<div class="t" style="left:1455.70px;top:852.33px;font-size:12.6px;font-weight:400;color:#444444;letter-spacing:0.170px;">8</div>
<div class="t" style="left:1484.00px;top:852.33px;font-size:12.6px;font-weight:400;color:#444444;letter-spacing:0.170px;">reCAPTCHA</div>
<div class="t" style="left:1638.00px;top:852.33px;font-size:12.6px;font-weight:400;color:#444444;letter-spacing:0.170px;">Add conditional logic</div>
<div class="t" style="left:38.00px;top:877.43px;font-size:12.6px;font-weight:400;color:#444444;letter-spacing:0.170px;">Marie</div>
<div class="t" style="left:145.00px;top:877.43px;font-size:12.6px;font-weight:400;color:#444444;letter-spacing:0.170px;">Curie</div>
<div class="t" style="left:251.00px;top:877.43px;font-size:12.6px;font-weight:400;color:#2f8ad2;letter-spacing:0.170px;">marie.curie@email.com</div>
<div class="t" style="left:418.00px;top:877.43px;font-size:12.6px;font-weight:400;color:#444444;letter-spacing:0.170px;">France</div>
<div class="t" style="left:561.00px;top:877.43px;font-size:12.6px;font-weight:400;color:#444444;letter-spacing:0.170px;">wpdt</div>
<div class="t" style="left:716.00px;top:877.43px;font-size:12.6px;font-weight:400;color:#444444;letter-spacing:0.170px;">upgrade</div>
<div class="t" style="left:926.70px;top:877.43px;font-size:12.6px;font-weight:400;color:#444444;letter-spacing:0.170px;">4</div>
<div class="t" style="left:1088.70px;top:877.43px;font-size:12.6px;font-weight:400;color:#444444;letter-spacing:0.170px;">5</div>
<div class="t" style="left:1254.70px;top:877.43px;font-size:12.6px;font-weight:400;color:#444444;letter-spacing:0.170px;">5</div>
<div class="t" style="left:1455.70px;top:877.43px;font-size:12.6px;font-weight:400;color:#444444;letter-spacing:0.170px;">9</div>
<div class="t" style="left:1484.00px;top:877.43px;font-size:12.6px;font-weight:400;color:#444444;letter-spacing:0.170px;">Conditional Formatting</div>
<div class="t" style="left:1638.00px;top:877.43px;font-size:12.6px;font-weight:400;color:#444444;letter-spacing:0.170px;">More export formats</div>
<div class="t" style="left:38.00px;top:902.53px;font-size:12.6px;font-weight:400;color:#444444;letter-spacing:0.170px;">Peter</div>
<div class="t" style="left:145.00px;top:902.53px;font-size:12.6px;font-weight:400;color:#444444;letter-spacing:0.170px;">Müller</div>
<div class="t" style="left:251.00px;top:902.53px;font-size:12.6px;font-weight:400;color:#2f8ad2;letter-spacing:0.170px;">peter.mueller@email.com</div>
<div class="t" style="left:418.00px;top:902.53px;font-size:12.6px;font-weight:400;color:#444444;letter-spacing:0.170px;">Germany</div>
<div class="t" style="left:561.00px;top:902.53px;font-size:12.6px;font-weight:400;color:#444444;letter-spacing:0.170px;">ivyforms</div>
<div class="t" style="left:716.00px;top:902.53px;font-size:12.6px;font-weight:400;color:#444444;letter-spacing:0.170px;">new</div>
<div class="t" style="left:926.70px;top:902.53px;font-size:12.6px;font-weight:400;color:#444444;letter-spacing:0.170px;">5</div>
<div class="t" style="left:1088.70px;top:902.53px;font-size:12.6px;font-weight:400;color:#444444;letter-spacing:0.170px;">4</div>
<div class="t" style="left:1254.70px;top:902.53px;font-size:12.6px;font-weight:400;color:#444444;letter-spacing:0.170px;">3</div>
<div class="t" style="left:1455.70px;top:902.53px;font-size:12.6px;font-weight:400;color:#444444;letter-spacing:0.170px;">7</div>
<div class="t" style="left:1484.00px;top:902.53px;font-size:12.6px;font-weight:400;color:#444444;letter-spacing:0.170px;">Drag-and-Drop Builder</div>
<div class="t" style="left:1638.00px;top:902.53px;font-size:12.6px;font-weight:400;color:#444444;letter-spacing:0.170px;">Add payment integrations</div>
<div class="t" style="left:38.00px;top:927.63px;font-size:12.6px;font-weight:400;color:#444444;letter-spacing:0.170px;">Sarah</div>
<div class="t" style="left:145.00px;top:927.63px;font-size:12.6px;font-weight:400;color:#444444;letter-spacing:0.170px;">Tan</div>
<div class="t" style="left:251.00px;top:927.63px;font-size:12.6px;font-weight:400;color:#2f8ad2;letter-spacing:0.170px;">sarah.tan@email.com</div>
<div class="t" style="left:418.00px;top:927.63px;font-size:12.6px;font-weight:400;color:#444444;letter-spacing:0.170px;">Australia</div>
<div class="t" style="left:561.00px;top:927.63px;font-size:12.6px;font-weight:400;color:#444444;letter-spacing:0.170px;">amelia</div>
<div class="t" style="left:716.00px;top:927.63px;font-size:12.6px;font-weight:400;color:#444444;letter-spacing:0.170px;">renewal</div>
<div class="t" style="left:926.70px;top:927.63px;font-size:12.6px;font-weight:400;color:#444444;letter-spacing:0.170px;">4</div>
<div class="t" style="left:1088.70px;top:927.63px;font-size:12.6px;font-weight:400;color:#444444;letter-spacing:0.170px;">5</div>
<div class="t" style="left:1254.70px;top:927.63px;font-size:12.6px;font-weight:400;color:#444444;letter-spacing:0.170px;">5</div>
<div class="t" style="left:1455.70px;top:927.63px;font-size:12.6px;font-weight:400;color:#444444;letter-spacing:0.170px;">9</div>
<div class="t" style="left:1484.00px;top:927.63px;font-size:12.6px;font-weight:400;color:#444444;letter-spacing:0.170px;">Event Management</div>
<div class="t" style="left:1638.00px;top:927.63px;font-size:12.6px;font-weight:400;color:#444444;letter-spacing:0.170px;">Option for event reminders</div>
<div class="t" style="left:38.00px;top:952.73px;font-size:12.6px;font-weight:400;color:#444444;letter-spacing:0.170px;">Sofia</div>
<div class="t" style="left:145.00px;top:952.73px;font-size:12.6px;font-weight:400;color:#444444;letter-spacing:0.170px;">Novak</div>
<div class="t" style="left:251.00px;top:952.73px;font-size:12.6px;font-weight:400;color:#2f8ad2;letter-spacing:0.170px;">sofia.n@email.com</div>
<div class="t" style="left:418.00px;top:952.73px;font-size:12.6px;font-weight:400;color:#444444;letter-spacing:0.170px;">Netherlands</div>
<div class="t" style="left:561.00px;top:952.73px;font-size:12.6px;font-weight:400;color:#444444;letter-spacing:0.170px;">wpdt</div>
<div class="t" style="left:716.00px;top:952.73px;font-size:12.6px;font-weight:400;color:#444444;letter-spacing:0.170px;">renewal</div>
<div class="t" style="left:926.70px;top:952.73px;font-size:12.6px;font-weight:400;color:#444444;letter-spacing:0.170px;">4</div>
<div class="t" style="left:1088.70px;top:952.73px;font-size:12.6px;font-weight:400;color:#444444;letter-spacing:0.170px;">4</div>
<div class="t" style="left:1254.70px;top:952.73px;font-size:12.6px;font-weight:400;color:#444444;letter-spacing:0.170px;">3</div>
<div class="t" style="left:1455.70px;top:952.73px;font-size:12.6px;font-weight:400;color:#444444;letter-spacing:0.170px;">6</div>
<div class="t" style="left:1484.00px;top:952.73px;font-size:12.6px;font-weight:400;color:#444444;letter-spacing:0.170px;">Inline Editing</div>
<div class="t" style="left:1638.00px;top:952.73px;font-size:12.6px;font-weight:400;color:#444444;letter-spacing:0.170px;">Improve filtering options</div>
</body></html>
